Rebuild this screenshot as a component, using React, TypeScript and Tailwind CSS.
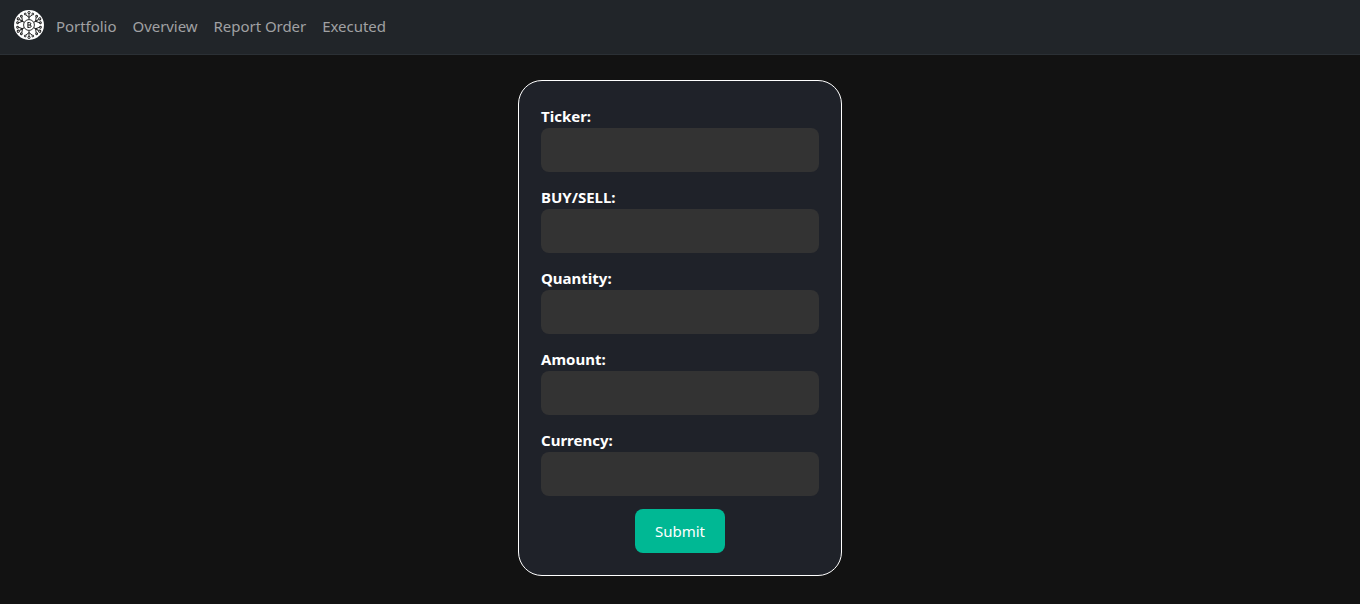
import React from "react";

const fields = ["Ticker:", "BUY/SELL:", "Quantity:", "Amount:", "Currency:"];
const links = ["Portfolio", "Overview", "Report Order", "Executed"];

function Logo() {
  const arm = (
    <g fill="none" stroke="#161616" strokeWidth="0.95">
      <path d="M15 9.6V4" />
      <path d="M15 7.4L12 5" />
      <path d="M15 7.4L18 5" />
      <circle cx="15" cy="2.6" r="1.1" />
      <circle cx="11.2" cy="4" r="0.9" />
      <circle cx="18.8" cy="4" r="0.9" />
    </g>
  );
  return (
    <svg width="30" height="30" viewBox="0 0 30 30" className="mb-[4px] shrink-0">
      <circle cx="15" cy="15" r="15" fill="#fff" />
      {[0, 60, 120, 180, 240, 300].map((a) => (
        <g key={a} transform={`rotate(${a} 15 15)`}>{arm}</g>
      ))}
      <circle cx="15" cy="15" r="5.4" fill="#fff" stroke="#161616" strokeWidth="0.9" />
      <path d="M13.9 12.2V17.8M13.9 12.6H15.6Q16.9 12.7 16.8 13.8Q16.7 15 15.5 15H13.9M15.5 15Q17.3 15 17.2 16.3Q17 17.4 15.6 17.4H13.9" fill="none" stroke="#161616" strokeWidth="1" />
    </svg>
  );
}

export default function App() {
  return (
    <div className="min-h-[604px] bg-[#121212] font-['Noto_Sans','Open_Sans',sans-serif]">
      <nav className="flex h-[55px] items-center gap-3 border-b border-[#2b3035] bg-[#212529] pl-[14px]">
        <Logo />
        <div className="mb-[2px] flex items-center gap-4">
          {links.map((l) => (
            <a key={l} className="text-[15px] leading-6 tracking-[-0.04px] text-[#a0a1a3]">{l}</a>
          ))}
        </div>
      </nav>
      <div className="flex justify-center pt-[25px]">
        <form className="w-[324px] rounded-3xl border border-white bg-[#1f2229] px-[22px] pt-[23px] pb-[22px]">
          {fields.map((f) => (
            <div key={f} className="mb-[13px]">
              <label className="block text-[15px] leading-6 font-bold text-white">{f}</label>
              <input className="block h-11 w-full rounded-lg bg-[#333333]" />
            </div>
          ))}
          <div className="flex justify-center">
            <button type="button" className="h-11 w-[90px] rounded-lg bg-[#00b894] text-[15px] text-white">Submit</button>
          </div>
        </form>
      </div>
    </div>
  );
}
